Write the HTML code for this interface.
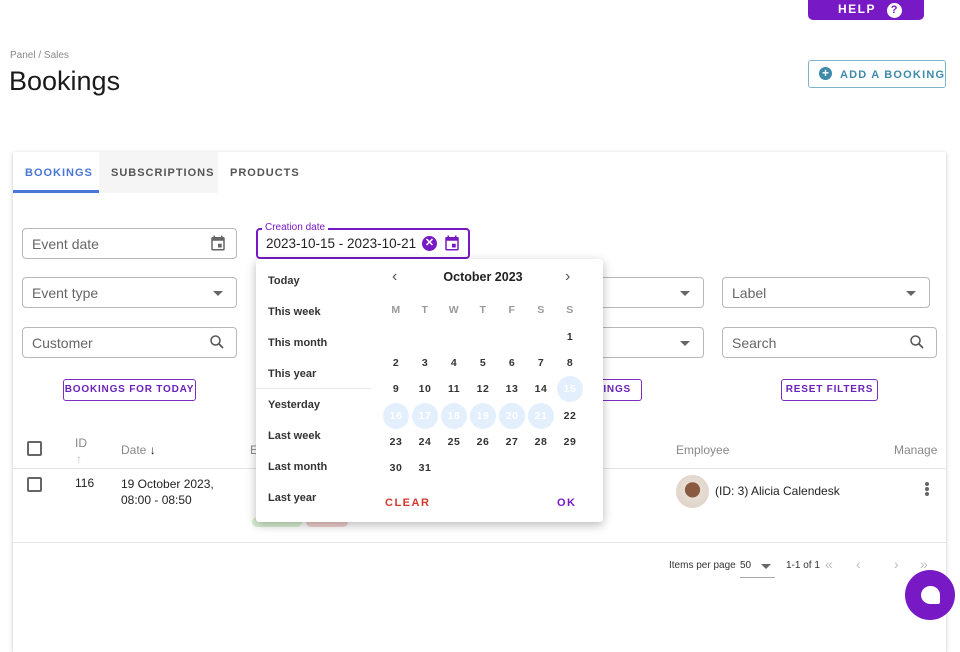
<!DOCTYPE html>
<html><head><meta charset="utf-8"><style>
*{box-sizing:border-box;margin:0;padding:0}
body{width:960px;height:640px;overflow:hidden;background:#fff;font-family:"Liberation Sans",Arial,sans-serif;color:#222;position:relative}
.a{position:absolute;white-space:nowrap}
.f{position:absolute;border:1px solid #b8b8b8;border-radius:4px;height:31px;font-size:14px;color:#666;padding:7px 9px;white-space:nowrap}
.btn{position:absolute;border:1px solid #7a2fc0;border-radius:3px;color:#6a22b8;font-size:10px;font-weight:bold;letter-spacing:.8px;text-align:center;line-height:20px;height:22px;white-space:nowrap}
.tri{position:absolute;width:0;height:0;border-left:5px solid transparent;border-right:5px solid transparent;border-top:5px solid #666}
.li{position:absolute;left:268px;font-size:11px;font-weight:bold;color:#333}
.d{position:absolute;width:26px;height:26px;margin-left:-13px;margin-top:-13px;text-align:center;line-height:26px;font-size:10.5px;font-weight:bold;color:#333;letter-spacing:.5px}
.s{background:#e3effc;border-radius:50%;color:#fff}
.w{color:#999;font-weight:bold}
.th{position:absolute;font-size:12px;color:#888;white-space:nowrap}
.tab{position:absolute;top:167px;font-size:11px;font-weight:bold;letter-spacing:1px;color:#555}
</style></head><body>
<div class="a" style="left:808px;top:-6px;width:116px;height:26px;background:#7719c4;border-radius:5px;color:#fff;font-size:12px;font-weight:bold;letter-spacing:1.5px;padding:8px 0 0 30px">HELP <span style="display:inline-block;width:15px;height:15px;border-radius:50%;background:#fff;color:#7719c4;text-align:center;line-height:15px;font-size:11px;letter-spacing:0;margin-left:6px">?</span></div>
<div class="a" style="left:10px;top:50px;font-size:10px;color:#888">Panel / Sales</div>
<div class="a" style="left:9px;top:66px;font-size:27px;color:#1a1a1a">Bookings</div>
<div class="a" style="left:808px;top:60px;width:138px;height:28px;border:1px solid #7fb3c9;border-radius:3px;color:#3d8aab;font-size:11px;font-weight:bold;letter-spacing:1.2px;padding:8px 0 0 31px">ADD A BOOKING</div>
<div class="a" style="left:819px;top:67px;width:13px;height:13px;border-radius:50%;background:#3d8aab;color:#fff;font-size:12px;line-height:13px;text-align:center;font-weight:bold">+</div>

<div class="a" style="left:13px;top:152px;width:933px;height:500px;box-shadow:0 1px 4px rgba(0,0,0,.22);background:#fff"></div>
<div class="a" style="left:99px;top:152px;width:119px;height:41px;background:#f5f5f5"></div>
<div class="a" style="left:13px;top:190px;width:86px;height:3px;background:#4a76d8"></div>
<div class="tab" style="left:25px;color:#4a76d8">BOOKINGS</div>
<div class="tab" style="left:111px">SUBSCRIPTIONS</div>
<div class="tab" style="left:230px">PRODUCTS</div>

<div class="f" style="left:22px;top:228px;width:215px">Event date</div>
<svg class="a" style="left:209px;top:234px" width="18" height="18" viewBox="0 0 24 24"><path fill="#666" d="M19 4h-1V2h-2v2H8V2H6v2H5a2 2 0 0 0-2 2v14a2 2 0 0 0 2 2h14a2 2 0 0 0 2-2V6a2 2 0 0 0-2-2zm0 16H5V9h14zm-7-7h5v5h-5z"/></svg>
<div class="a" style="left:256px;top:228px;width:214px;height:31px;border:2px solid #7719c4;border-radius:4px;font-size:13.5px;color:#222;padding:6px 8px">2023-10-15 - 2023-10-21</div>
<div class="a" style="left:262px;top:222px;background:#fff;padding:0 3px;font-size:10px;color:#7719c4">Creation date</div>
<div class="a" style="left:422px;top:236px;width:15px;height:15px;border-radius:50%;background:#7719c4;color:#fff;font-size:11px;font-weight:bold;text-align:center;line-height:15px">✕</div>
<svg class="a" style="left:443px;top:234px" width="18" height="18" viewBox="0 0 24 24"><path fill="#7719c4" d="M19 4h-1V2h-2v2H8V2H6v2H5a2 2 0 0 0-2 2v14a2 2 0 0 0 2 2h14a2 2 0 0 0 2-2V6a2 2 0 0 0-2-2zm0 16H5V9h14zm-7-7h5v5h-5z"/></svg>

<div class="f" style="left:22px;top:277px;width:215px">Event type</div><div class="tri" style="left:213px;top:291px"></div>
<div class="f" style="left:560px;top:277px;width:144px"></div><div class="tri" style="left:680px;top:291px"></div>
<div class="f" style="left:722px;top:277px;width:208px">Label</div><div class="tri" style="left:906px;top:291px"></div>
<div class="f" style="left:22px;top:327px;width:215px">Customer</div>
<div class="f" style="left:560px;top:327px;width:144px"></div><div class="tri" style="left:680px;top:341px"></div>
<div class="f" style="left:722px;top:327px;width:215px">Search</div>
<svg class="a" style="left:208px;top:333px" width="18" height="18" viewBox="0 0 24 24"><circle cx="10" cy="10" r="6" fill="none" stroke="#555" stroke-width="2"/><path d="M14.5 14.5L20 20" stroke="#555" stroke-width="2.2"/></svg>
<svg class="a" style="left:908px;top:333px" width="18" height="18" viewBox="0 0 24 24"><circle cx="10" cy="10" r="6" fill="none" stroke="#555" stroke-width="2"/><path d="M14.5 14.5L20 20" stroke="#555" stroke-width="2.2"/></svg>

<div class="btn" style="left:63px;top:379px;width:133px">BOOKINGS FOR TODAY</div>
<div class="btn" style="left:520px;top:379px;width:122px;text-align:right;padding-right:10px">BOOKINGS</div>
<div class="btn" style="left:781px;top:379px;width:97px">RESET FILTERS</div>

<div class="a" style="left:27px;top:441px;width:15px;height:15px;border:2px solid #666;border-radius:2px"></div>
<div class="th" style="left:75px;top:436px">ID</div><div class="th" style="left:76px;top:452px;color:#bbb">↑</div>
<div class="th" style="left:121px;top:443px">Date <span style="color:#222">↓</span></div>
<div class="th" style="left:250px;top:443px">E</div>
<div class="th" style="left:676px;top:443px">Employee</div>
<div class="th" style="left:894px;top:443px">Manage</div>
<div class="a" style="left:13px;top:468px;width:933px;height:1px;background:#e5e5e5"></div>
<div class="a" style="left:27px;top:477px;width:15px;height:15px;border:2px solid #666;border-radius:2px"></div>
<div class="a" style="left:75px;top:476px;font-size:12px">116</div>
<div class="a" style="left:121px;top:476px;font-size:12px;line-height:16px">19 October 2023,<br>08:00 - 08:50</div>
<div class="a" style="left:252px;top:517px;width:50px;height:10px;border-radius:5px;background:#d8f0d2"></div>
<div class="a" style="left:306px;top:517px;width:42px;height:10px;border-radius:5px;background:#f2d0cc"></div>
<div class="a" style="left:676px;top:475px;width:33px;height:33px;border-radius:50%;background:radial-gradient(circle at 50% 45%,#8a5a40 0 30%,#e8ddd2 32%,#d8cfc6 100%)"></div>
<div class="a" style="left:715px;top:484px;font-size:12px">(ID: 3) Alicia Calendesk</div>
<div class="a" style="left:925px;top:482px;width:4px;height:4px;border-radius:50%;background:#666;box-shadow:0 5px 0 #666,0 10px 0 #666"></div>
<div class="a" style="left:13px;top:542px;width:933px;height:1px;background:#e5e5e5"></div>
<div class="a" style="left:669px;top:560px;font-size:10px;color:#333">Items per page</div>
<div class="a" style="left:740px;top:560px;font-size:10px;color:#333">50</div><div class="tri" style="left:761px;top:564px"></div>
<div class="a" style="left:740px;top:577px;width:35px;height:1px;background:#aaa"></div>
<div class="a" style="left:786px;top:560px;font-size:10px;color:#333">1-1 of 1</div>
<div class="a" style="left:825px;top:556px;font-size:14px;color:#bbb">«</div>
<div class="a" style="left:856px;top:556px;font-size:14px;color:#bbb">‹</div>
<div class="a" style="left:894px;top:556px;font-size:14px;color:#bbb">›</div>
<div class="a" style="left:920px;top:556px;font-size:14px;color:#bbb">»</div>
<div class="a" style="left:905px;top:570px;width:50px;height:50px;border-radius:50%;background:#7719c4"></div>
<div class="a" style="left:921px;top:586px;width:19px;height:18px;border-radius:50% 50% 2px 50%;background:#fff"></div>

<div class="a" style="left:256px;top:259px;width:347px;height:263px;background:#fff;border-radius:3px;box-shadow:0 3px 10px rgba(0,0,0,.28)"></div>
<div class="li" style="top:275px">Today</div>
<div class="li" style="top:306px">This week</div>
<div class="li" style="top:337px">This month</div>
<div class="li" style="top:368px">This year</div>
<div class="a" style="left:256px;top:388px;width:115px;height:1px;background:#e8e8e8"></div>
<div class="li" style="top:399px">Yesterday</div>
<div class="li" style="top:430px">Last week</div>
<div class="li" style="top:461px">Last month</div>
<div class="li" style="top:492px">Last year</div>
<div class="a" style="left:392px;top:268px;font-size:16px;color:#555">‹</div>
<div class="a" style="left:565px;top:268px;font-size:16px;color:#555">›</div>
<div class="a" style="left:420px;top:270px;width:126px;text-align:center;font-size:12.5px;font-weight:bold;color:#222">October 2023</div>
<div class="d w" style="left:396px;top:310px">M</div><div class="d w" style="left:425px;top:310px">T</div><div class="d w" style="left:454px;top:310px">W</div><div class="d w" style="left:483px;top:310px">T</div><div class="d w" style="left:512px;top:310px">F</div><div class="d w" style="left:541px;top:310px">S</div><div class="d w" style="left:570px;top:310px">S</div>
<div class="d" style="left:570px;top:337px">1</div>
<div class="d" style="left:396px;top:363px">2</div><div class="d" style="left:425px;top:363px">3</div><div class="d" style="left:454px;top:363px">4</div><div class="d" style="left:483px;top:363px">5</div><div class="d" style="left:512px;top:363px">6</div><div class="d" style="left:541px;top:363px">7</div><div class="d" style="left:570px;top:363px">8</div>
<div class="d" style="left:396px;top:389px">9</div><div class="d" style="left:425px;top:389px">10</div><div class="d" style="left:454px;top:389px">11</div><div class="d" style="left:483px;top:389px">12</div><div class="d" style="left:512px;top:389px">13</div><div class="d" style="left:541px;top:389px">14</div><div class="d s" style="left:570px;top:389px">15</div>
<div class="d s" style="left:396px;top:416px">16</div><div class="d s" style="left:425px;top:416px">17</div><div class="d s" style="left:454px;top:416px">18</div><div class="d s" style="left:483px;top:416px">19</div><div class="d s" style="left:512px;top:416px">20</div><div class="d s" style="left:541px;top:416px">21</div><div class="d" style="left:570px;top:416px">22</div>
<div class="d" style="left:396px;top:442px">23</div><div class="d" style="left:425px;top:442px">24</div><div class="d" style="left:454px;top:442px">25</div><div class="d" style="left:483px;top:442px">26</div><div class="d" style="left:512px;top:442px">27</div><div class="d" style="left:541px;top:442px">28</div><div class="d" style="left:570px;top:442px">29</div>
<div class="d" style="left:396px;top:468px">30</div><div class="d" style="left:425px;top:468px">31</div>
<div class="a" style="left:385px;top:497px;font-size:11px;font-weight:bold;letter-spacing:1.5px;color:#d03a2f">CLEAR</div>
<div class="a" style="left:557px;top:497px;font-size:11px;font-weight:bold;letter-spacing:1.5px;color:#7719c4">OK</div>
</body></html>
